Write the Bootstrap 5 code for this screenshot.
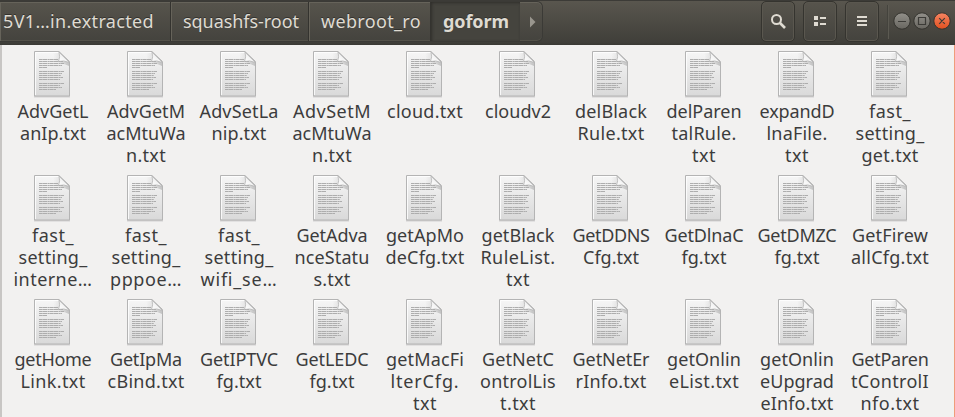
<!DOCTYPE html>
<html lang="en">
<head>
<meta charset="utf-8">
<title>goform</title>
<link href="https://cdn.jsdelivr.net/npm/bootstrap@5.3.0/dist/css/bootstrap.min.css" rel="stylesheet">
<style>
body{width:955px;height:417px;font-family:"Noto Sans","Open Sans",sans-serif;background:#f2f1f0;color:#3c3c3c}
.titlebar{height:45px;background:linear-gradient(#59564e,#403f3a 94%,#3a3934);border-top:1px solid #3c3b37;color:#dfdbd2;text-shadow:0 -1px 0 #33322e}
.crumbs{height:41px;width:543px;border:1px solid #3b3a36;border-left:0;border-radius:0 6px 6px 0;background:linear-gradient(#57544c,#44433e);box-shadow:inset 0 1px #66635a,inset 0 -1px #535149}
.crumb{height:39px;font-size:18px;line-height:39px;border-right:1px solid #34332f;box-shadow:inset 1px 0 #66635a}
.crumb.current{background:#45443e;font-weight:700;border-right:0;box-shadow:inset 1px 1px 3px #302f2b}
.tool{width:34px;height:41px;border:1px solid #35342f;border-radius:5px;background:linear-gradient(#57544c,#44433e);box-shadow:inset 0 0 0 1px #5a574f}
.tool-gap{gap:8px}
.rule{width:2px;height:34px;background:#44433d;border-right:1px solid #5c5a52}
.files{height:372px;border-left:2px solid #c8c6c4;border-right:1px solid #f09c7a;padding:6px 0 0 3.5px}
.file-grid{display:grid;grid-template-columns:repeat(10,93px);grid-auto-rows:124px}
.file-name{font-size:18px;line-height:22px;margin-top:2px;padding-left:2px}
.file-name span{display:block;white-space:nowrap}
</style>
<script src="https://cdn.jsdelivr.net/npm/bootstrap@5.3.0/dist/js/bootstrap.bundle.min.js"></script>
</head>
<body class="overflow-hidden m-0">
<svg width="0" height="0" class="position-absolute" aria-hidden="true">
  <defs>
    <linearGradient id="paper" x2="0" y2="1"><stop stop-color="#f6f6f6"/><stop offset="1" stop-color="#d9d9d9"/></linearGradient>
    <linearGradient id="fold" x1="0" y1="1" x2="1" y2="0"><stop stop-color="#fff"/><stop offset=".45" stop-color="#f4f4f4"/><stop offset=".6" stop-color="#c4c4c4"/></linearGradient>
    <linearGradient id="shade" x2="1" y2="0"><stop stop-color="#999" stop-opacity="0"/><stop offset="1" stop-color="#777" stop-opacity=".6"/></linearGradient>
    <linearGradient id="gray" x2="0" y2="1"><stop stop-color="#92908a"/><stop offset="1" stop-color="#686660"/></linearGradient>
    <linearGradient id="orange" x2="0" y2="1"><stop stop-color="#f58563"/><stop offset="1" stop-color="#e2501f"/></linearGradient>
    <symbol id="doc" viewBox="0 0 38 47">
      <path d="M1 45.5h36" stroke="#000" stroke-opacity=".13" stroke-width="2"/>
      <path d="M1.5 .5h24.500l10.500 10v34.500h-35z" fill="url(#paper)" stroke="#b4b4b4"/>
      <path d="M2.500 44V1.500h23" fill="none" stroke="#fff" stroke-opacity=".8"/>
      <path d="M20 2h6v8h10v5q-9-4-14-4z" fill="url(#shade)" opacity=".6"/>
      <path d="M26 1q1.500 5-.5 9.500q5-1.500 11 1z" fill="url(#fold)" stroke="#b4b4b4" stroke-width=".8"/>
      <path d="M6 8.500h19M6 12.500h25M6 14.500h23M6 16.500h8M6 20.500h25M6 22.500h23M6 24.500h22M6 26.500h24M6 28.500h21M6 32.500h25M6 34.500h21M6 36.500h23M6 38.500h17M6 10.500h24" stroke="#adadad" stroke-dasharray="3 .3 5 .4 2 .3"/>
    </symbol>
  </defs>
</svg>
<header class="titlebar d-flex align-items-start">
  <nav class="crumbs d-flex flex-shrink-0" aria-label="Path">
    <div class="crumb" style="width:171px;padding-left:3px"><span data-w="150">5V1…in.extracted</span></div>
    <div class="crumb" style="width:138px;padding-left:12px"><span data-w="115">squashfs-root</span></div>
    <div class="crumb" style="width:122px;padding-left:12px"><span data-w="99">webroot_ro</span></div>
    <div class="crumb current" style="width:89px;padding-left:12px"><span data-w="65">goform</span></div>
    <svg width="22" height="39"><path d="M10 14.500l5.500 5.500-5.500 5.500z" fill="#99968e"/></svg>
  </nav>
  <div class="d-flex tool-gap ms-auto">
    <div class="tool"><svg width="32" height="39" fill="none" stroke="#dfdbd2"><circle cx="14.500" cy="17.500" r="4.500" stroke-width="2"/><path d="M18 21l5 5" stroke-width="2.600"/></svg></div>
    <div class="tool"><svg width="32" height="39" fill="#dfdbd2"><path d="M10 14h4v4h-4zM16 15h6v2h-6zM10 20h4v4h-4zM16 21h6v2h-6z"/></svg></div>
    <div class="tool"><svg width="32" height="39" fill="#dfdbd2"><path d="M11 14h10v2H11zM11 18h10v2H11zM11 22h10v2H11z"/></svg></div>
  </div>
  <div class="rule ms-2 mt-1"></div>
  <svg class="flex-shrink-0" width="66" height="41">
    <g stroke="#34332e"><circle cx="13" cy="20" r="8.200" fill="url(#gray)"/><circle cx="33" cy="20" r="8.200" fill="url(#gray)"/><circle cx="53" cy="20" r="8.200" fill="url(#orange)"/></g>
    <path d="M9 20.500h8M29.500 16.500h7v7h-7zM50.200 17.200l5.600 5.600m0-5.600l-5.600 5.600" fill="none" stroke="#3c3b37" stroke-width="1.200"/>
  </svg>
</header>
<main class="files overflow-hidden"><div class="file-grid" id="grid"></div></main>
<script>
// One entry per file: each label line is followed by its width in pixels.
const files = [
 'AdvGetL 70|anIp.txt 65','AdvGetM 77|acMtuWa 78|n.txt 39','AdvSetLa 78|nip.txt 54','AdvSetM 77|acMtuWa 78|n.txt 39','cloud.txt 75','cloudv2 65','delBlack 71|Rule.txt 66','delParen 74|talRule. 64|txt 23','expandD 74|lnaFile. 60|txt 23','fast_ 41|setting_ 68|get.txt 56',
 'fast_ 41|setting_ 68|interne… 78','fast_ 41|setting_ 68|pppoe… 71','fast_ 41|setting_ 68|wifi_se… 76','GetAdva 70|nceStatu 74|s.txt 36','getApMo 77|deCfg.txt 78','getBlack 72|RuleList. 74|txt 23','GetDDNS 76|Cfg.txt 55','GetDlnaC 78|fg.txt 44','GetDMZC 78|fg.txt 44','GetFirew 75|allCfg.txt 77',
 'getHome 76|Link.txt 64','GetIpMa 71|cBind.txt 76','GetIPTVC 77|fg.txt 44','GetLEDC 72|fg.txt 44','getMacFi 77|lterCfg. 68|txt 23','GetNetC 71|ontrolLis 75|t.txt 35','GetNetEr 76|rInfo.txt 70','getOnlin 73|eList.txt 69','getOnlin 73|eUpgrad 73|eInfo.txt 72','GetParen 76|tControlI 77|nfo.txt 58'];
document.getElementById('grid').innerHTML = files.map(f =>
 '<div class="d-flex flex-column align-items-center"><svg width="38" height="47"><use href="#doc"/></svg><div class="file-name text-center">' +
 f.split('|').map(l => { const [t, w] = l.split(' '); return `<span><b class="fw-normal d-inline-block" data-w="${w}">${t}</b></span>`; }).join('') + '</div></div>').join('');
// Adjusts tracking so that each line takes its listed width.
document.querySelectorAll('[data-w]').forEach(e => {
  const r = document.createRange(); r.selectNodeContents(e);
  const s = (e.dataset.w * 1 + 1 - r.getBoundingClientRect().width) / e.textContent.length;
  e.style.letterSpacing = s.toFixed(2) + 'px';
});
</script>
</body>
</html>
